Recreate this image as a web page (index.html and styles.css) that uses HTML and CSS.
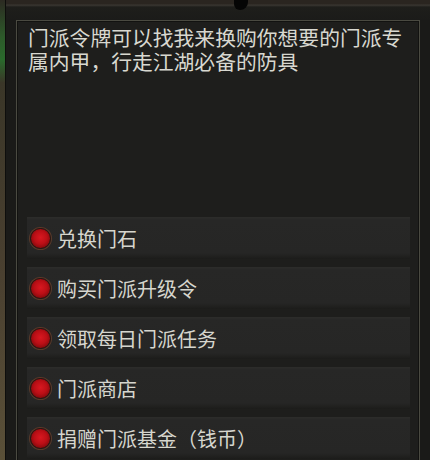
FILE: index.html
```html
<!DOCTYPE html>
<html lang="zh-CN">
<head>
    <meta charset="UTF-8">
    <title>门派</title>
    <link rel="stylesheet" href="styles.css">
</head>
<body>
    <div class="tela">
        <div class="borda-esq"></div>
        <div class="principal">
            <div class="topo"><span class="cursor"></span></div>
            <div class="painel">
                <p class="descricao">门派令牌可以找我来换购你想要的门派专属内甲，行走江湖必备的防具</p>
                <ul class="menu">
                    <li class="item"><span class="botao"></span>兑换门石</li>
                    <li class="item"><span class="botao"></span>购买门派升级令</li>
                    <li class="item"><span class="botao"></span>领取每日门派任务</li>
                    <li class="item"><span class="botao"></span>门派商店</li>
                    <li class="item"><span class="botao"></span>捐赠门派基金（钱币）</li>
                </ul>
            </div>
        </div>
    </div>
</body>
</html>
```

FILE: styles.css
```css
* {
    margin: 0;
    padding: 0;
    box-sizing: border-box;
}

body {
    width: 430px;
    height: 460px;
    overflow: hidden;
    background-color: #1a1a18;
    font-family: "Noto Sans CJK SC", "Noto Sans", sans-serif;
    color: #d8d8d0;
}

.tela {
    display: flex;
    height: 460px;
}

/* tira texturizada da esquerda */
.borda-esq {
    width: 6px;
    flex-shrink: 0;
    background: linear-gradient(180deg, #2c2a22 0%, #2d5a2a 8%, #2a6a2c 13%, #3a3628 18%, #4a4030 60%, #5a5038 100%);
    border-right: 1px solid #0e0e0c;
}

.principal {
    flex: 1;
}

.topo {
    height: 20px;
    position: relative;
    background: linear-gradient(180deg, #2a2520 0px, #2a2520 4px, #3b3833 5px, #1e1e1b 7px, #1b1b19 20px);
}

.cursor {
    position: absolute;
    left: 228px;
    top: 0;
    width: 14px;
    height: 10px;
    background: #050505;
    border-radius: 0 0 8px 6px;
}

.painel {
    margin-left: 10px;
    width: 404px;
    height: 440px;
    background-color: #1e1e1c;
    border: 1px solid #4a4a41;
    border-bottom: none;
    box-shadow: inset 1px 1px 0 #121210, inset -1px 0 0 #121210;
    padding: 4px 9px 0 10px;
}

.descricao {
    height: 192px;
    padding-left: 1px;
    padding-right: 4px;
    font-size: 20.8px;
    line-height: 24px;
}

.menu {
    list-style: none;
    display: flex;
    flex-direction: column;
    gap: 8px;
}

.item {
    height: 42px;
    display: flex;
    align-items: center;
    gap: 6px;
    padding-left: 3px;
    font-size: 20px;
    color: #d6d6ce;
    background: linear-gradient(180deg, #2d2d2b 0px, #272726 3px, #262625 36px, #1c1c1a 42px);
}

.botao {
    width: 21px;
    height: 21px;
    border-radius: 50%;
    background: radial-gradient(circle at 50% 45%, #d81820 0%, #bb0f16 45%, #7c0a0c 80%, #4a0808 100%);
    border: 1px solid #2a1510;
    box-shadow: 0 0 0 1px #5a3a2a;
}
```
